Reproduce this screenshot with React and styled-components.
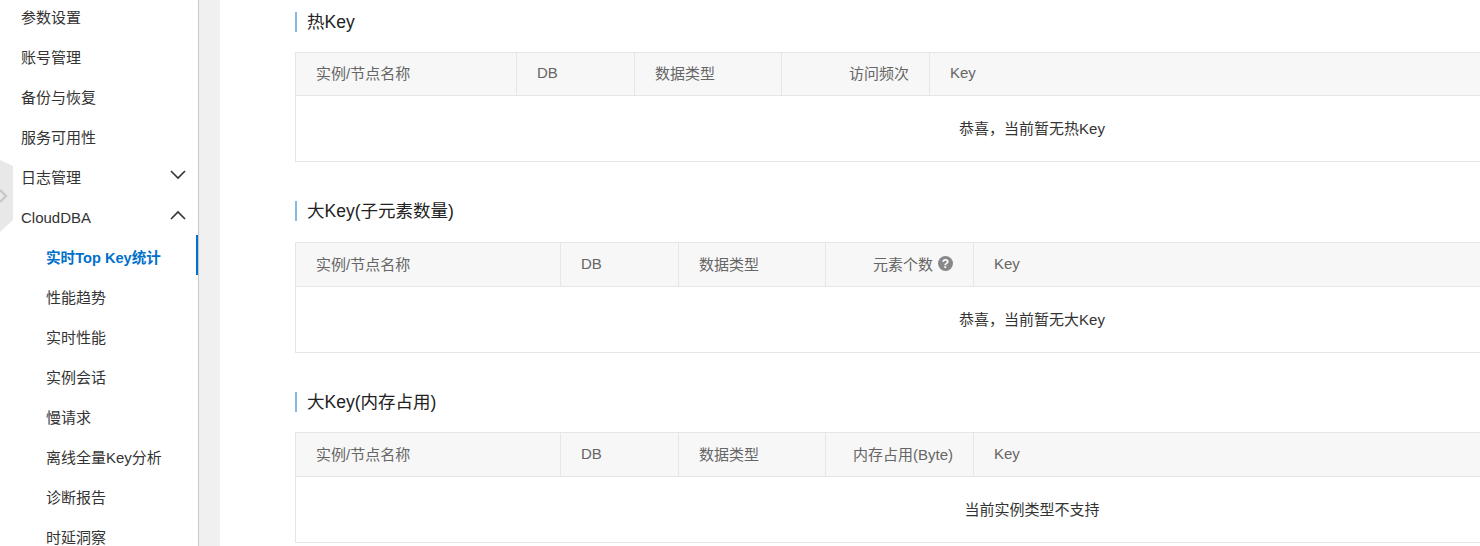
import React from "react"
import styled, { createGlobalStyle } from "styled-components"

const GlobalStyle = createGlobalStyle`
  html, body {
    margin: 0;
    padding: 0;
    height: 546px;
    overflow: hidden;
    background: #fff;
  }
  body {
    font-family: "Liberation Sans", "Noto Sans CJK SC", sans-serif;
    font-size: 15px;
    color: #333;
  }
`

const Page = styled.div`
  display: flex;
  width: 1480px;
  height: 546px;
  overflow: hidden;
`

const Sidebar = styled.nav`
  position: relative;
  flex: none;
  width: 198px;
  height: 546px;
  overflow: hidden;
  border-right: 1px solid #c8c8c8;
  background: #fff;
`

const NavList = styled.div`
  margin-top: -5px;
`

const NavItem = styled.div`
  display: flex;
  align-items: center;
  justify-content: space-between;
  box-sizing: border-box;
  height: 40px;
  padding: 0 12px 0 ${(p) => (p.$sub ? 46 : 21)}px;
  border-right: ${(p) => (p.$active ? "2px solid #0070cc" : "none")};
  color: ${(p) => (p.$active ? "#0070cc" : "#333")};
  font-size: ${(p) => (p.$active ? "14.6px" : "15px")};
  font-weight: ${(p) => (p.$active ? "bold" : "normal")};
  white-space: nowrap;
`

const NavLabel = styled.span`
  padding-top: 5px;
  line-height: 20px;
`

const CollapseHandle = styled.div`
  position: absolute;
  left: 0;
  top: 160px;
  width: 13px;
  height: 72px;
  background: #e8e8e8;
  clip-path: polygon(0 0, 100% 6px, 100% 60px, 0 100%);
  display: flex;
  align-items: center;
`

const Gutter = styled.div`
  flex: none;
  width: 21px;
  height: 546px;
  background: #f0f0f0;
`

const Main = styled.main`
  flex: 1;
  min-width: 0;
  padding: 0 0 0 75px;
  background: #fff;
`

const Section = styled.section`
  padding-top: ${(p) => p.$top}px;
`

const Title = styled.h3`
  margin: 0;
  height: 20px;
  padding-left: 10px;
  border-left: 2px solid #88b7e0;
  color: #222;
  font-size: 17.5px;
  font-weight: normal;
  line-height: 20px;
  white-space: nowrap;
`

const Table = styled.div`
  margin-top: ${(p) => p.$gap}px;
  width: 1474px;
  box-sizing: border-box;
  border: 1px solid #e6e6e6;
`

const HeadRow = styled.div`
  display: flex;
  height: ${(p) => p.$height}px;
  background: #f7f7f7;
  border-bottom: 1px solid #e6e6e6;
`

const HeadCell = styled.div`
  display: flex;
  align-items: center;
  justify-content: ${(p) => (p.$right ? "flex-end" : "flex-start")};
  flex: ${(p) => (p.$width ? `none` : "1")};
  width: ${(p) => (p.$width ? `${p.$width}px` : "auto")};
  box-sizing: border-box;
  padding: 0 20px 3px;
  border-right: ${(p) => (p.$width ? "1px solid #e6e6e6" : "none")};
  color: #666;
  white-space: nowrap;
`

const HelpBadge = styled.span`
  display: inline-flex;
  align-items: center;
  justify-content: center;
  width: 15px;
  height: 15px;
  margin: 1px 0 0 5px;
  border-radius: 50%;
  background: #888;
  color: #fff;
  font-size: 12px;
  font-weight: bold;
`

const EmptyRow = styled.div`
  display: flex;
  align-items: center;
  justify-content: center;
  box-sizing: border-box;
  height: 65px;
  padding-bottom: 2px;
  color: #333;
`

const Chevron = ({ up }) => (
  <svg width="16" height="10" viewBox="0 0 16 10" fill="none" stroke="#333" strokeWidth="1.6">
    <path d={up ? "M1 9L8 2l7 7" : "M1 1l7 7 7-7"} />
  </svg>
)

const navItems = [
  { label: "参数设置" },
  { label: "账号管理" },
  { label: "备份与恢复" },
  { label: "服务可用性" },
  { label: "日志管理", chevron: "down" },
  { label: "CloudDBA", chevron: "up" },
  { label: "实时Top Key统计", sub: true, active: true },
  { label: "性能趋势", sub: true },
  { label: "实时性能", sub: true },
  { label: "实例会话", sub: true },
  { label: "慢请求", sub: true },
  { label: "离线全量Key分析", sub: true },
  { label: "诊断报告", sub: true },
  { label: "时延洞察", sub: true },
]

const sections = [
  {
    title: "热Key",
    top: 12,
    gap: 20,
    headHeight: 42,
    widths: [221, 118, 147, 148],
    metric: "访问频次",
    empty: "恭喜，当前暂无热Key",
  },
  {
    title: "大Key(子元素数量)",
    top: 39,
    gap: 21,
    headHeight: 43,
    widths: [265, 118, 147, 148],
    metric: "元素个数",
    help: true,
    empty: "恭喜，当前暂无大Key",
  },
  {
    title: "大Key(内存占用)",
    top: 39,
    gap: 20,
    headHeight: 43,
    widths: [265, 118, 147, 148],
    metric: "内存占用(Byte)",
    empty: "当前实例类型不支持",
  },
]

export default function App() {
  return (
    <Page>
      <GlobalStyle />
      <Sidebar>
        <NavList>
          {navItems.map((item) => (
            <NavItem key={item.label} $sub={item.sub} $active={item.active}>
              <NavLabel>{item.label}</NavLabel>
              {item.chevron && <Chevron up={item.chevron === "up"} />}
            </NavItem>
          ))}
        </NavList>
        <CollapseHandle>
          <svg width="8" height="16" viewBox="0 0 8 16" fill="none" stroke="#c8c8c8" strokeWidth="2.4">
            <path d="M0 2l6 6-6 6" />
          </svg>
        </CollapseHandle>
      </Sidebar>
      <Gutter />
      <Main>
        {sections.map((s) => (
          <Section key={s.title} $top={s.top}>
            <Title>{s.title}</Title>
            <Table $gap={s.gap}>
              <HeadRow $height={s.headHeight}>
                <HeadCell $width={s.widths[0]}>实例/节点名称</HeadCell>
                <HeadCell $width={s.widths[1]}>DB</HeadCell>
                <HeadCell $width={s.widths[2]}>数据类型</HeadCell>
                <HeadCell $width={s.widths[3]} $right>
                  {s.metric}
                  {s.help && <HelpBadge>?</HelpBadge>}
                </HeadCell>
                <HeadCell>Key</HeadCell>
              </HeadRow>
              <EmptyRow>{s.empty}</EmptyRow>
            </Table>
          </Section>
        ))}
      </Main>
    </Page>
  )
}
